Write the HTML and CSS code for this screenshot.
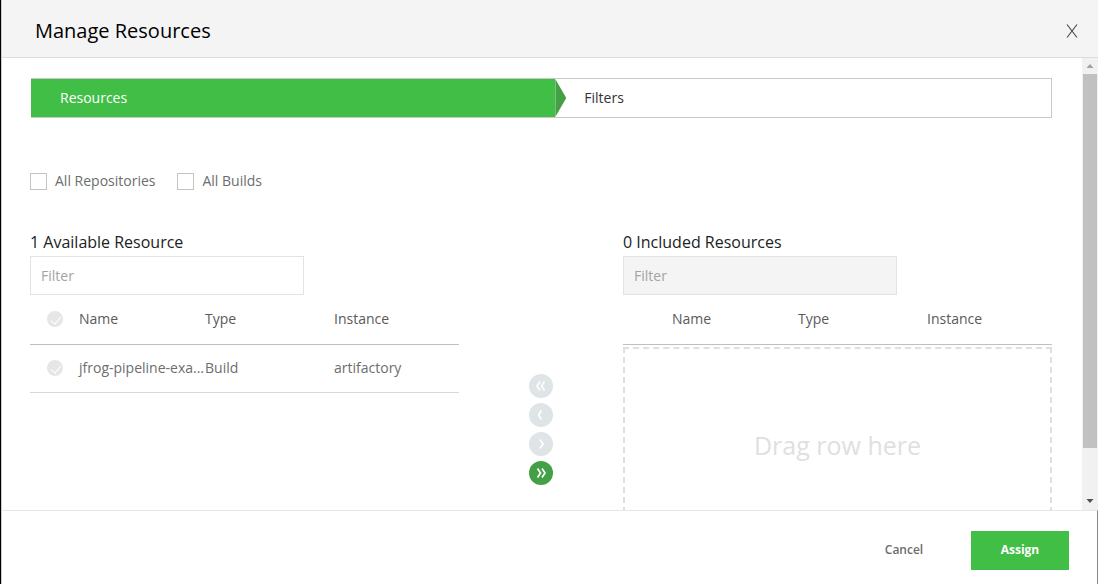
FILE: index.html
```html
<!DOCTYPE html>
<html lang="en">
<head>
  <meta charset="UTF-8">
  <meta name="viewport" content="width=device-width, initial-scale=1.0">
  <title>Manage Resources</title>
  <link rel="stylesheet" href="styles.css">
</head>
<body>
  <div class="modal">
    <header class="modal-header">
      <h1>Manage Resources</h1>
      <button type="button" class="close" aria-label="Close">
        <svg width="12" height="14" viewBox="0 0 12 14"><path d="M1 0.5 L11 13.5 M11 0.5 L1 13.5"/></svg>
      </button>
    </header>

    <div class="modal-body">
      <div class="scroll-area">
        <div class="wizard">
          <div class="step active">Resources</div>
          <div class="step">Filters</div>
        </div>

        <div class="options">
          <label class="option"><input type="checkbox" class="box">All Repositories</label>
          <label class="option"><input type="checkbox" class="box">All Builds</label>
        </div>

        <div class="picker">
          <section class="panel">
            <h2><label for="filter-available">1 Available Resource</label></h2>
            <input type="text" class="filter" id="filter-available" placeholder="Filter">
            <table class="grid">
              <thead>
                <tr>
                  <th class="col-check"><input type="checkbox" class="round" aria-label="Select all"></th>
                  <th class="col-name">Name</th>
                  <th class="col-type">Type</th>
                  <th>Instance</th>
                </tr>
              </thead>
              <tbody>
                <tr>
                  <td class="col-check"><input type="checkbox" class="round" aria-label="Select row"></td>
                  <td class="col-name">jfrog-pipeline-exa...</td>
                  <td>Build</td>
                  <td>artifactory</td>
                </tr>
              </tbody>
            </table>
          </section>

          <div class="transfer">
            <button type="button" disabled aria-label="Remove all">
              <svg width="24" height="24" viewBox="0 0 24 24"><path d="M11 7.5 L8 12 L11 16.5 M15.5 7.5 L12.5 12 L15.5 16.5"/></svg>
            </button>
            <button type="button" disabled aria-label="Remove selected">
              <svg width="24" height="24" viewBox="0 0 24 24"><path d="M12.500 7.5 L9.500 12 L12.500 16.5"/></svg>
            </button>
            <button type="button" disabled aria-label="Add selected">
              <svg width="24" height="24" viewBox="0 0 24 24"><path d="M11 7.5 L14 12 L11 16.5"/></svg>
            </button>
            <button type="button" aria-label="Add all">
              <svg width="24" height="24" viewBox="0 0 24 24"><path d="M8.5 7.5 L11.5 12 L8.5 16.5 M13 7.5 L16 12 L13 16.5"/></svg>
            </button>
          </div>

          <section class="panel">
            <h2><label for="filter-included">0 Included Resources</label></h2>
            <input type="text" class="filter" id="filter-included" placeholder="Filter" disabled>
            <table class="grid">
              <thead>
                <tr>
                  <th class="col-check"></th>
                  <th class="col-name">Name</th>
                  <th class="col-type">Type</th>
                  <th>Instance</th>
                </tr>
              </thead>
            </table>
            <div class="dropzone">Drag row here</div>
          </section>
        </div>
      </div>

      <div class="scrollbar" aria-hidden="true">
        <svg class="up" width="16" height="16" viewBox="0 0 16 16"><path d="M8 6 L11.5 10 H4.5 Z"/></svg>
        <div class="track"><div class="thumb"></div></div>
        <svg class="down" width="16" height="16" viewBox="0 0 16 16"><path d="M4.5 5 H11.5 L8 9 Z"/></svg>
      </div>
    </div>

    <footer class="modal-footer">
      <button type="button" class="btn">Cancel</button>
      <button type="button" class="btn primary">Assign</button>
    </footer>
  </div>
</body>
</html>
```

FILE: styles.css
```css
*{
  box-sizing: border-box;
}
body{
  margin: 0;
  font-family: "Open Sans", "Noto Sans", sans-serif;
  font-size: 14px;
  line-height: 20px;
  color: #6d6d6d;
}
button, input{
  font: inherit;
  color: inherit;
  margin: 0;
}
button{
  border: 0;
  padding: 0;
  background: none;
  cursor: pointer;
}
h1, h2{
  margin: 0;
}

.modal{
  display: flex;
  flex-direction: column;
  height: 100vh;
  border-left: 1px solid #000;
  background: #fff;
}

/* header */
.modal-header{
  display: flex;
  align-items: center;
  justify-content: space-between;
  height: 58px;
  padding: 4px 20px 0 33px;
  border-bottom: 1px solid #dcdcdc;
  border-left: 1px solid #ccc;
  background: #f4f4f4;
}
.modal-header h1{
  font-size: 20px;
  line-height: 28px;
  font-weight: 500;
  color: #000;
}
.close{
  display: flex;
}
.close svg{
  fill: none;
  stroke: #444;
  stroke-width: 1.1;
}

/* body */
.modal-body{
  display: flex;
  flex: 1;
  min-height: 0;
  border-left: 1px solid #ccc;
}
.scroll-area{
  flex: 1;
  overflow-y: auto;
  scrollbar-width: none;
  padding: 20px 30px 20px 28px;
}

.wizard{
  display: flex;
  height: 40px;
  margin-left: 1px;
  border: 1px solid #c8c8c8;
  border-left: 0;
}
.wizard .step{
  position: relative;
  flex: 49;
  padding-left: 29px;
  line-height: 38px;
  color: #333;
}
.wizard .step.active{
  flex: 52;
  color: #fff;
  background: #40be46;
}
.wizard .step.active::after{
  content: "";
  position: absolute;
  top: 0;
  left: 100%;
  width: 11px;
  height: 100%;
  background: #43a047;
  clip-path: polygon(0 0, 100% 50%, 0 100%);
}

.options{
  display: flex;
  gap: 22px;
  margin-top: 53px;
}
.option{
  display: flex;
  align-items: center;
  gap: 8px;
}
.box{
  appearance: none;
  width: 17px;
  height: 17px;
  border: 1px solid #c4c4c4;
}

.picker{
  display: grid;
  grid-template-columns: 1fr 164px 1fr;
  margin-top: 41px;
}
.panel h2{
  padding-bottom: 4px;
  font-size: 16px;
  line-height: 20px;
  font-weight: 500;
  color: #222;
}
.filter{
  display: block;
  width: 274px;
  height: 39px;
  padding: 0 10px;
  border: 1px solid #e3e3e3;
  background: #fff;
}
.filter::placeholder{
  color: #a3a3a3;
}
.filter:disabled{
  background: #f4f4f4;
}

.grid{
  width: 100%;
  table-layout: fixed;
  border-collapse: collapse;
}
.grid th, .grid td{
  padding: 0;
  height: 48px;
  text-align: left;
  border-bottom: 1px solid #d8d8d8;
}
.grid th{
  height: 49px;
  font-weight: 500;
  color: #5a5a5a;
  border-color: #c0c0c0;
}
.grid .col-check{
  width: 49px;
  padding-left: 17px;
}
.grid .col-name{
  width: 126px;
  white-space: nowrap;
}
.grid .col-type{
  width: 129px;
}
.round{
  appearance: none;
  position: relative;
  display: block;
  width: 16px;
  height: 16px;
  border-radius: 50%;
  background: #e6e6e6;
}
.round::after{
  content: "";
  position: absolute;
  left: 6px;
  top: 3px;
  width: 5px;
  height: 9px;
  border: solid #fff;
  border-width: 0 1px 1px 0;
  transform: rotate(40deg);
}

.transfer{
  display: flex;
  flex-direction: column;
  align-items: center;
  gap: 5px;
  padding-top: 142px;
}
.transfer button{
  display: flex;
  border-radius: 50%;
  background: #43a047;
}
.transfer button:disabled{
  background: #dfe4e6;
  cursor: default;
}
.transfer svg{
  fill: none;
  stroke: #fff;
  stroke-width: 1.7;
}

.dropzone{
  display: flex;
  align-items: center;
  justify-content: center;
  height: 196px;
  margin-top: 2px;
  border: 2px dashed #dfdfdf;
  font-size: 25px;
  color: #dfe0e1;
}

/* scrollbar */
.scrollbar{
  display: flex;
  flex-direction: column;
  width: 16px;
  background: #f1f1f1;
}
.scrollbar .track{
  flex: 1;
  padding: 0 1px;
}
.scrollbar .thumb{
  height: 89%;
  background: #c1c1c1;
}
.scrollbar .up{
  fill: #a3a3a3;
}
.scrollbar .down{
  fill: #505050;
}

/* footer */
.modal-footer{
  display: flex;
  align-items: center;
  justify-content: flex-end;
  gap: 18px;
  height: 74px;
  padding: 5px 28px 0 0;
  border-top: 1px solid #e6e6e6;
  border-left: 1px solid #ccc;
  border-right: 1px solid #888;
}
.btn{
  width: 98px;
  height: 39px;
  font-size: 12px;
  font-weight: 600;
}
.btn.primary{
  color: #fff;
  font-weight: 700;
  background: #40be46;
}
```
